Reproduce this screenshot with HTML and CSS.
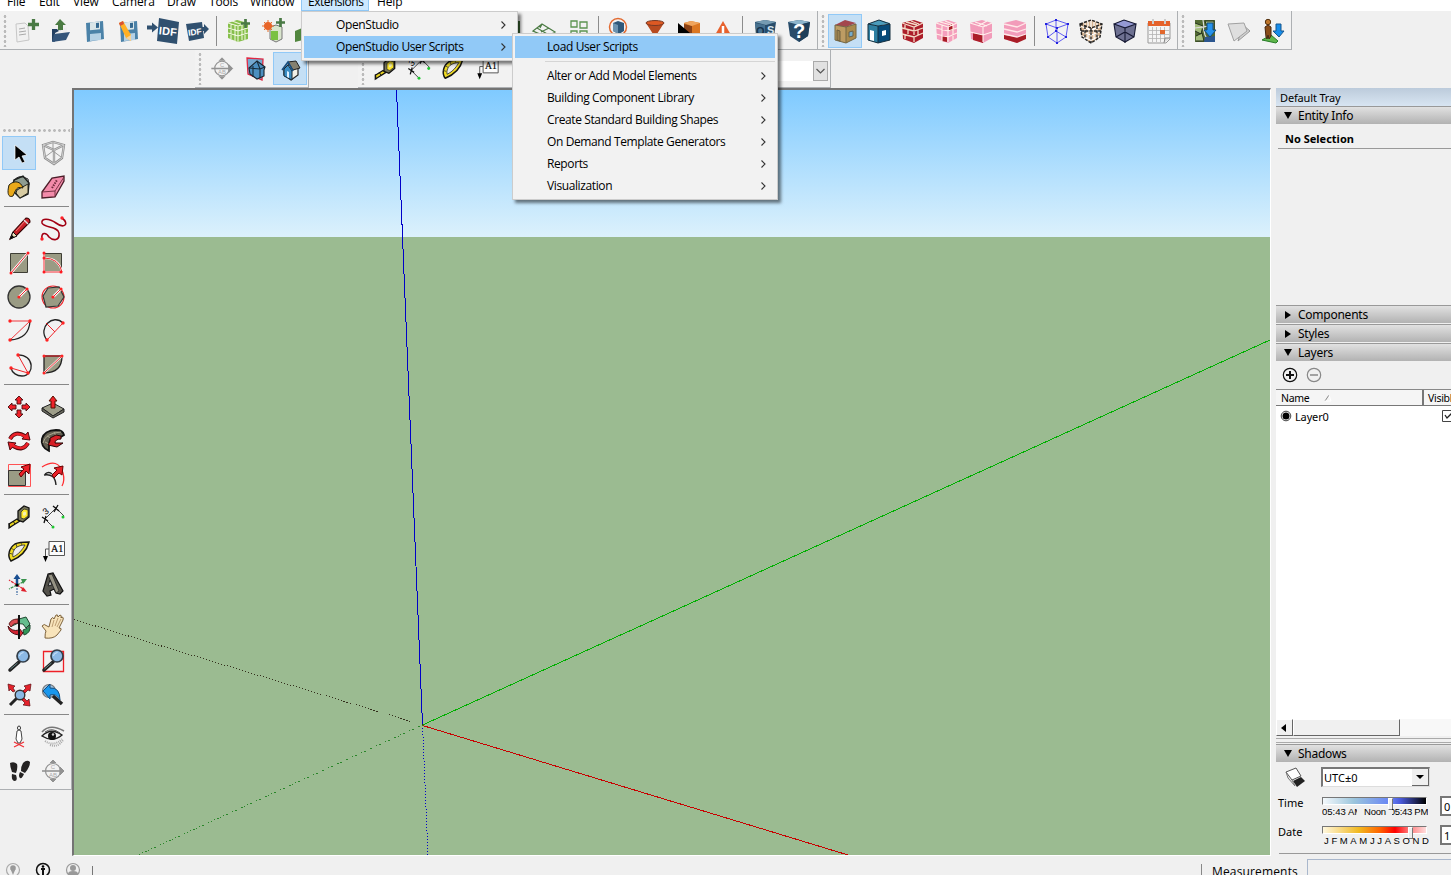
FILE: index.html
```html
<!DOCTYPE html>
<html lang="en">
<head>
<meta charset="utf-8">
<title>SketchUp</title>
<link rel="stylesheet" href="styles.css">
</head>
<body>
<svg class="defs" width="0" height="0">
  <defs>
    <symbol id="plus" viewBox="0 0 10 10"><path d="M3.500 0h3v3.500h3.500v3h-3.500V10h-3V6.500H0v-3h3.500z" fill="#4a7a45"/></symbol>
    <symbol id="section" viewBox="0 0 34 34"><g fill="none" stroke="#929292"><circle cx="17" cy="17" r="7.500" stroke-width="1.200"/><path d="M6 17h21" stroke-width="1.600"/><path d="M14 9l3-3 3 3M14 25l3 3 3-3" fill="#929292"/><path d="M24 13l4 4-4 4z" fill="#929292"/></g><g fill="#aaa" font-family="Liberation Sans" font-size="6" text-anchor="middle"><text x="17" y="15">C</text><text x="17" y="23">AB</text></g></symbol>
    <symbol id="tape" viewBox="0 0 34 34"><path d="M7 24l8-5 3 2-8 5-3 2z" fill="#e8d321" stroke="#111" stroke-width="1.300"/><path d="M7 23l1 5M11 21l2 3" stroke="#111"/><path d="M16 11l6-5 5 2v9l-6 5-5-2z" fill="#77765c" stroke="#111" stroke-width="1.300"/><path d="M19 12l3-3 4 1v6l-4 3-3-1z" fill="#ffe92d" stroke="#222" stroke-width=".7"/><path d="M21 12.500l2-1 1 1v2l-2 1.500-1-1z" fill="#f6f2b5"/></symbol>
    <symbol id="dimension" viewBox="0 0 34 34"><path d="M9 19L20 8M9 19l8 8M20 8l8 8" stroke="#444" fill="none"/><path d="M6 17l6 4M10 16l-2 7M17 6l6 5M22 5l-4 7" stroke="#111" stroke-width="1.300"/><circle cx="17" cy="27" r="1.500" fill="#1fc831"/><circle cx="27" cy="17" r="1.500" fill="#1fc831"/><text x="7" y="14" transform="rotate(-40 10 11)" font-family="Liberation Sans" font-size="9">3</text></symbol>
    <symbol id="protractor" viewBox="0 0 34 34"><path d="M9 27C5 22 7 14 13 10c4-2 9-2 14-2-2 8-8 15-18 19z" fill="#f0dc24" stroke="#171713" stroke-width="1.500"/><path d="M11 23c-1-4 1-8 4-10 3-1.500 5-2 8-2-3 5-6 9-12 12z" fill="#eee" stroke="#222" stroke-width=".8"/><path d="M7 19l3 1M9 14l3 2M14 10l1 3M19 9l1 2" stroke="#333" stroke-width=".8"/></symbol>
    <symbol id="label" viewBox="0 0 34 34"><path d="M13 7.500h15.500v14H13zM13 15H9.500v8" fill="#fcfcfc" stroke="#555"/><path d="M7 22h5l-2.500 6z"/><text x="15" y="18" font-family="Liberation Serif" font-size="10" stroke="#111" stroke-width=".2">A1</text></symbol>
    <symbol id="disk" viewBox="0 0 34 34"><path d="M8 9l17-2 1 18-17 3z" fill="#4b82a8"/><path d="M12 8.500l10-1.200v8l-10 1z" fill="#d9e5e8"/><path d="M18 9l3-.3v5l-3 .3z" fill="#356990"/><path d="M12 20l11-1v7l-11 1z" fill="#b5d1e5"/></symbol>
    <symbol id="lens" viewBox="0 0 34 34"><path d="M8 26l9-8" stroke="#222" stroke-width="3.500" stroke-linecap="round"/><path d="M8.500 25l7-6" stroke="#688" stroke-width="1"/><circle cx="21" cy="12" r="6" fill="#8bb9e5" stroke="#333e48" stroke-width="1.700"/><path d="M17.500 12q0-3 4-3.500" stroke="#cde5fb" fill="none"/></symbol>
    <symbol id="expand" viewBox="0 0 16 16"><path d="M5.500 4.500L9 8l-3.500 3.500" fill="none" stroke="#333" stroke-width="1.100"/></symbol>
  </defs>
</svg>

<div class="app">
<nav class="menubar">
  <span>File</span><span>Edit</span><span>View</span><span>Camera</span><span>Draw</span><span>Tools</span><span>Window</span><span class="open">Extensions</span><span>Help</span>
</nav>

<div class="toolrow">
  <div class="toolbar wide">
    <i class="grip"></i>
    <svg class="tool"><path d="M6 10l9-1 3 3 1 14-12 2z" fill="#f1f1f1" stroke="#c7c7c7"/><path d="M9 15l6-1M9 18l7-1M9 21l7-1" stroke="#aaa"/><use href="#plus" x="18" y="5" width="11" height="11"/></svg>
    <svg class="tool"><path d="M8 15h5l2 2 8-3v5l-13 9-2-1z" fill="#223f61"/><path d="M11 19l12-6v7l-12 6z" fill="#eee"/><path d="M10 20l16-2-4 8-14 2z" fill="#34557a"/><path d="M16 5l6 6h-3v5h-5v-5h-3z" fill="#4b7b43"/></svg>
    <svg class="tool"><use href="#disk"/></svg>
    <svg class="tool"><use href="#disk"/><path d="M7 9l4-2 8 14v6l-5-3z" fill="#ffb023"/><path d="M7 9l4-2 1 3-4 2z" fill="#d75232"/><path d="M14 24l5-3v6z" fill="#f2d29d"/></svg>
    <svg class="tool"><path d="M13 4l20 4-2 22-20-3z" fill="#30506f"/><path d="M1 11.500h5V8.500l6 5-6 5v-3H1z" fill="#30506f"/><text x="13" y="21" font-family="Liberation Sans" font-weight="bold" font-size="11" textLength="18" fill="#fff" transform="rotate(6 20 17)">IDF</text></svg>
    <svg class="tool"><path d="M6 10l16-2 2 16-15 3z" fill="#30506f"/><path d="M20 13h4v-3l5 5-5 5v-3h-4z" fill="#30506f"/><text x="8" y="21" font-family="Liberation Sans" font-weight="bold" font-size="8.500" fill="#fff" transform="rotate(-7 15 18)">IDF</text></svg>
    <i class="sep"></i>
    <svg class="tool"><path d="M6 9l9-3 11 3v16l-10 3-10-4z" fill="#86bf4b"/><path d="M6 14l10 3 10-3M6 19l10 3 10-3M16 12v16M9 10v15M13 11v16M20 10v16M23 10v16M6 9l10 3 10-3M10 7l11 4" stroke="#edf5d9" stroke-width="1.100" fill="none"/><use href="#plus" x="19" y="5" width="9" height="9"/></svg>
    <svg class="tool"><path d="M14 13l6-2 6 2v12l-6 3-6-3z" fill="#d9e5cd" stroke="#777"/><path d="M15 17h7v9h-7z" fill="#7ac143"/><path d="M12 6v12M6 12h12M8 8l8 8M16 8l-8 8" stroke="#e86c29" stroke-width="1"/><circle cx="12" cy="12" r="4" fill="#e86427"/><use href="#plus" x="20" y="4" width="9" height="9"/></svg>
    <svg class="tool"><path d="M5 17l12-5v13L5 28z" fill="#51863e"/></svg>
    <svg class="tool"></svg><svg class="tool"></svg><svg class="tool"></svg><svg class="tool"></svg><svg class="tool"></svg>
    <svg class="tool"><path d="M20 7h6v15h-6z" fill="#3f6c35"/></svg>
    <svg class="tool"><path d="M5 17l9-7 13 8-8 5zM9 14l12 7M13 18l8-4M14 10l-2 4" fill="none" stroke="#4b7b43" stroke-width="1.200"/></svg>
    <svg class="tool"><path d="M9 7h6v6H9zM18 8h7v6h-7zM9 17h6v7H9zM18 17h7v7h-7z" fill="none" stroke="#5c9450" stroke-width="1.300"/></svg>
    <i class="sep"></i>
    <svg class="tool"><circle cx="14" cy="13" r="8.500" fill="#f2f2f2" stroke="#e26a31" stroke-width="1.500"/><path d="M9 9l5-2 6 2v8l-5 3-6-3z" fill="#2f587a"/><path d="M9 9l5 2v9l-5-3z" fill="#6c93b0"/></svg>
    <svg class="tool"><path d="M8 9l7 11v5h4v-5l7-11z" fill="#b84b20"/><ellipse cx="17" cy="9" rx="9" ry="2.500" fill="#dd5923" stroke="#773a25"/></svg>
    <svg class="tool"><path d="M12 9l7-2 9 2v14l-8 4-7-5z" fill="#dc7823"/><path d="M12 10l8 2v13l-8-3z" fill="#8a4115"/><path d="M12 9l7-2 9 2-8 3z" fill="#efa55e"/><path d="M6 9v18l12-8z"/></svg>
    <svg class="tool"><path d="M17 7l8 14H9z" fill="#e7612d"/><path d="M17 12v7" stroke="#fff" stroke-width="2.500"/></svg>
    <i class="sep"></i>
    <svg class="tool"><path d="M7 8l10-2 11 2-2 15-9 5-9-5z" fill="#284c6a"/><path d="M7 8l10-2 11 2-10 3z" fill="#759bb2"/><path d="M7 9l10 2v16l-8-4z" fill="#47718f"/><text x="8" y="21" font-family="Liberation Sans" font-weight="bold" font-size="11" fill="#17334d">O</text><text x="19" y="20" font-family="Liberation Sans" font-weight="bold" font-size="11" fill="#d5e5ef">S</text></svg>
    <svg class="tool"><path d="M6 8l11-2 11 2-2 14-9 6-9-6z" fill="#284c6a"/><path d="M6 8l11-2 11 2-11 3z" fill="#8db5cc"/><path d="M17 11l11-3-2 14-9 6z" fill="#1e3e59"/><text x="11" y="24" font-family="Liberation Sans" font-weight="bold" font-size="20" fill="#fff">?</text></svg>
  </div>
  <div class="toolbar">
    <i class="grip"></i>
    <svg class="tool selected"><path d="M7 11l11 2v16L7 26z" fill="#bd9c63"/><path d="M18 13l10-3v14l-10 5z" fill="#a98a4d"/><path d="M7 11l10-5 11 3-10 4z" fill="#a3474e"/><path d="M7 11l11 2v16L7 26zM18 13l10-3v14l-10 5" fill="none" stroke="#736745"/><path d="M9 16l3 1v10l-3-1z" fill="#9b8251" stroke="#6e6141"/><path d="M21 18l4-1v5l-4 1z" fill="#75acc9" stroke="#66604b"/></svg>
    <svg class="tool"><path d="M6 10l10 2v17L6 26z" fill="#2e7fa1"/><path d="M16 12l12-2v16l-12 3z" fill="#074a78"/><path d="M6 10l11-4 11 3-12 3z" fill="#4b9bbb"/><path d="M6 10l10 2v17L6 26zM16 12l12-2v16l-12 3M6 10l11-4 11 4" fill="none" stroke="#142e3e"/><path d="M8 16l4 1v10l-4-1zM20 17l4-1v5l-4 1z" fill="#fff"/></svg>
    <svg class="tool"><path d="M6 9l12-3 9 3v15l-9 5-11-4z" fill="#ac1e2a"/><path d="M6 9l12 4 9-4M6 14l12 3 9-3M6 20l12 3 9-4M18 13v4M12 15v5M22 16v5M18 23v5M10 8l11 3M15 7l8 3M9 11v3M9 21v4M18 18v3" fill="none" stroke="#f4dbc7" stroke-width="1.300"/></svg>
    <svg class="tool"><path d="M6 9l12-3 9 3v15l-9 5-11-4z" fill="#f49fbd"/><path d="M19 11l4-1v6l-4 1zM12 22l5 1v5l-5-1z" fill="#a91d27"/><path d="M6 9l12 4 9-4M6 14l12 3 9-3M6 20l12 3 9-4M18 13v15M12 11v16M23 11v16M10 8l11 3M15 7l8 3" fill="none" stroke="#fff0e8" stroke-width="1.100"/></svg>
    <svg class="tool"><path d="M6 9l12-3 10 3v15l-9 5-12-4z" fill="#f29cba"/><path d="M9 19l10 2v8l-10-3z" fill="#ac1d29"/><path d="M6 9l13 4 9-4M6 18l13 3 9-3M19 13v15M11 8l12 4M14 12l9-5" fill="none" stroke="#fff0ed" stroke-width="1.100"/></svg>
    <svg class="tool"><path d="M6 9l12-3 10 3v15l-9 5-13-4z" fill="#f29cba"/><path d="M6 21l13 2 9-3v5l-9 4-13-4z" fill="#a91d27"/><path d="M6 10l13 3 9-4M6 15l13 3 9-3M6 20l13 3 9-3" fill="none" stroke="#ffe8e8" stroke-width="1.300"/></svg>
    <i class="sep"></i>
    <svg class="tool"><g fill="none" stroke="#4e4af0" stroke-width=".9"><path d="M6 10l10-4 12 4-11 4zM17 14v15l9-6 2-13M6 10l2 13 9 6M8 23l8-6 10 6M16 6v11"/></g><path d="M5 9h2v2H5zM15 5h2v2h-2zM27 9h2v2h-2zM16 13h2v2h-2zM15 16h2v2h-2zM16 28h2v2h-2zM7 22h2v2H7zM25 22h2v2h-2z" fill="#2222df"/></svg>
    <svg class="tool"><path d="M6 10l11-4 11 4-2 13-9 6-9-6z" fill="#d6b491"/><path d="M6 12l11 4 11-4M7 17l10 4 10-4M8 22l9 4 9-4M11 8v17M17 6v23M23 8v16M14 7v19M20 8v18" fill="none" stroke="#fff" stroke-width="1.200"/><path d="M6 10l11-4 11 4-2 13-9 6-9-6zM6 10l11 4 11-4M17 14v15M11 12v13M23 12v13M7 17h20" fill="none" stroke="#222" stroke-width="1.400" stroke-dasharray="3 1.300"/></svg>
    <svg class="tool"><path d="M6 10l10-4 12 4-2 13-9 5-9-5z" fill="#6e7192"/><path d="M6 10l10-4 12 4-11 4z" fill="#9499d4"/><path d="M6 10l11 4v14l-9-5zM28 10l-11 4v14l9-5zM6 10l10-4 12 4M8 23l9-5 9 5" stroke="#171a34" fill="none" stroke-width="1.100"/></svg>
    <svg class="tool"><path d="M6 9h22v16l-4 4H6z" fill="#f5f5f5" stroke="#999"/><path d="M6 7h22v5H6z" fill="#e5622b"/><path d="M11 5v5M23 5v5" stroke="#ccc" stroke-width="2"/><path d="M7 16.500h20M7 20.500h20M7 24.500h18M10.500 13v15M14.500 13v15M18.500 13v15M22.500 13v15" stroke="#b4b4b4" stroke-width=".8"/><path d="M18 16h5v4h-5z" fill="#e2682d"/><path d="M22 29l1-5h5" fill="#ddd" stroke="#888"/></svg>
  </div>
  <div class="toolbar google">
    <i class="grip"></i>
    <svg class="tool"><path d="M7 6h20v22H7z" fill="#526a32"/><path d="M7 9l8 3-2 8-6-3M17 7h9v9h-6zM8 22l6-3 2 8H8" fill="#a3bc7c" stroke="#26321f"/><path d="M7 14l8-1 2 8 3 6M15 6l1 7 7-2" stroke="#ddd" fill="none" stroke-width="1.200"/><path d="M17 23l10-1v6H16z" fill="#2c568f"/><path d="M19 9h6v7h3l-6 7-6-7h3z" fill="#2592ec" stroke="#174d7a"/></svg>
    <svg class="tool"><path d="M21 11l7 6-12 10z" fill="#d0d0d0" stroke="#999"/><path d="M6 10l16-1 3 8-13 10z" fill="#dedede" stroke="#a1a1a1"/></svg>
    <svg class="tool"><path d="M6 26l9-5 7 6-2 2z" fill="#5fb64b" stroke="#277b29"/><path d="M9 13l3-2 3 2v9l-2 3-1-4-1 4-1-2z" fill="#8a4d19" stroke="#442611"/><circle cx="12" cy="8" r="2.700" fill="#be752b" stroke="#523211"/><path d="M20 10h5v7h3l-5 6-6-6h3z" fill="#168deb" stroke="#17568c"/></svg>
  </div>
</div>

<div class="toolrow second">
  <div class="toolbar">
    <i class="grip"></i>
    <svg class="tool"><use href="#section"/></svg>
    <svg class="tool"><path d="M8 6l16 1-1 21-14-6z" fill="#75a9d0" stroke="#df2843" stroke-width="1.300"/><path d="M10 16l8-7 8 6-1 3v6l-7 3-7-5z" fill="#4c8fc0" stroke="#19242d" stroke-width="1.100"/><path d="M18 9l3 8v9M10 16l11 1 5-2M14 14v11" fill="none" stroke="#172b38" stroke-width="1.100"/></svg>
    <svg class="tool selected"><path d="M11 17l7-7 7 4v9l-7 5-7-5z" fill="#f1f0e8" stroke="#222" stroke-width="1.200"/><path d="M11 17l4-4 4 6v9l-8-4z" fill="#3b8dc3" stroke="#182833"/><path d="M15 10l8-1 4 7-7 2z" fill="#858170" stroke="#222"/><path d="M14 19l2 1v6l-2-1z" fill="#dcefff"/><path d="M9 18l6-8 5 9" fill="none" stroke="#174d7d" stroke-width="1.600"/></svg>
  </div>
  <div class="toolbar views">
    <i class="grip"></i>
    <svg class="tool"><use href="#tape"/></svg>
    <svg class="tool"><use href="#dimension"/></svg>
    <svg class="tool"><use href="#protractor"/></svg>
    <svg class="tool"><use href="#label"/></svg>
    <div class="layerbox"><span><svg width="13" height="18"><path d="M2.500 7L6.500 11l4-4" fill="none" stroke="#555" stroke-width="1.200"/></svg></span></div>
  </div>
</div>

<main class="work">
  <aside class="palette">
    <div class="hgrip"></div>
    <div class="pair">
      <svg class="tool selected"><path d="M13 9v15l4-3 3 6 3-1-3-6 5-1z" fill="#000" stroke="#fff" stroke-width=".7"/></svg>
      <svg class="tool"><g fill="none" stroke="#8c8c8c" stroke-width="2.300"><path d="M7 9l10-3 11 3-2 13-8 6-9-6zM7 9l11 5 10-5M18 14v14"/></g><g fill="none" stroke="#d4d4d4" stroke-width=".9"><path d="M7 9l10-3 11 3-2 13-8 6-9-6zM7 9l11 5 10-5M18 14v14"/></g><path d="M9 21l8-6 8 6M17 7v8" fill="none" stroke="#999"/></svg>
      <svg class="tool"><path d="M12 10l9-4 6 7-1 11-8 4-8-8z" fill="#8e9c91" stroke="#171b18" stroke-width="1.400"/><path d="M15 20l11-6v9l-8 5-4-5z" fill="#d7cba2" stroke="#27271e"/><path d="M7 15c5-5 12-4 14 3-7-2-7 2-10 8-5 2-6-3-4-11z" fill="#eaa919" stroke="#252110"/><path d="M11 12Q16 3 26 9l1 6" fill="none" stroke="#222"/></svg>
      <svg class="tool"><path d="M6 22l10-14 12-2v5l-9 16-13 1z" fill="#f38baa" stroke="#4c1e29" stroke-width="1.300"/><path d="M6 22l13-1L28 7M19 21v6" fill="none" stroke="#6b2b3b" stroke-width=".9"/><path d="M16 18l5-8" stroke="#702b3d" stroke-width="2" stroke-dasharray="1.500 1"/></svg>
    </div>
    <i class="rule"></i>
    <div class="pair">
      <svg class="tool"><path d="M8 27l3-7L24 6q4 0 4 4L14 24z" fill="#c92129" stroke="#300" stroke-width="1.100"/><path d="M8 27l3-7 4 4z" fill="#eee2be" stroke="#111"/><path d="M14 19L23 9" stroke="#f67c78"/><path d="M22 8l4 4" stroke="#ddd" stroke-width="1.500"/><path d="M8 27l2-4 2 2z"/></svg>
      <svg class="tool"><path d="M26 6C34 12 28 17 20 11C13 6 5 6 6 11C8 16 22 14 23 21C24 29 17 29 13 25C10 20 5 20 6 27" fill="none" stroke="#a20013" stroke-width="1.600"/><circle cx="26" cy="6" r="1.700" fill="#ff2026"/><circle cx="6" cy="27" r="1.700" fill="#ff2026"/></svg>
      <svg class="tool"><path d="M8.500 7.500h17v19h-17z" fill="#9a9b84" stroke="#3e3e35"/><path d="M9 27L26 7" stroke="#fff" stroke-width="2.500"/><path d="M9 27L26 7" stroke="#e1242b"/><g fill="#ff1b22"><circle cx="9" cy="27" r="1.500"/><circle cx="26" cy="7" r="1.500"/></g></svg>
      <svg class="tool"><path d="M8.500 7.500h17v19h-17z" fill="#9a9b84" stroke="#3e3e35"/><path d="M8 12q15 0 18 14M8 7v19h18" fill="none" stroke="#fff" stroke-width="2"/><path d="M8 12q15 0 18 14M8 7v19h18" fill="none" stroke="#ee252b"/><g fill="#ff1b22"><circle cx="8" cy="7" r="1.500"/><circle cx="8" cy="12" r="1.500"/><circle cx="8" cy="26" r="1.500"/><circle cx="25" cy="26" r="1.500"/></g></svg>
      <svg class="tool"><circle cx="17" cy="17" r="11" fill="#9a9b84" stroke="#333" stroke-width="1.300"/><path d="M17 17l8-8" stroke="#fff" stroke-width="2.500"/><path d="M17 17l8-8" stroke="#ef2329"/><circle cx="17" cy="17" r="1.600" fill="#f22"/><circle cx="25" cy="9" r="1.600" fill="#f22"/></svg>
      <svg class="tool"><circle cx="17" cy="17" r="11" fill="none" stroke="#ef2329" stroke-width="1.100"/><path d="M12 8l11-1 5 10-6 9-12 1-3-11z" fill="#9a9b84" stroke="#333" stroke-width="1.200"/><path d="M17 17l8-8" stroke="#fff" stroke-width="2.500"/><path d="M17 17l8-8" stroke="#ef2329"/><circle cx="17" cy="17" r="1.600" fill="#f22"/><circle cx="25" cy="9" r="1.600" fill="#f22"/></svg>
      <svg class="tool"><path d="M28 7q-1 18-20 19" fill="none" stroke="#222" stroke-width="1.300"/><path d="M8 7h20L8 26" fill="none" stroke="#f0393e"/><circle cx="8" cy="7" r="1.700" fill="#f22"/><circle cx="28" cy="7" r="1.700" fill="#f22"/><circle cx="8" cy="26" r="1.700" fill="#f22"/></svg>
      <svg class="tool"><path d="M11 26C1 14 17-1 27 9" fill="none" stroke="#222" stroke-width="1.300"/><path d="M11 26L27 9M10 9l9 9" stroke="#ef2329" fill="none"/><circle cx="11" cy="26" r="1.700" fill="#f22"/><circle cx="27" cy="9" r="1.700" fill="#f22"/></svg>
      <svg class="tool"><path d="M15 7c18-1 18 21 5 21-5 0-10-3-11-8" fill="none" stroke="#222" stroke-width="1.300"/><path d="M16 7l10 18-17-5" fill="none" stroke="#ef2329"/><circle cx="16" cy="7" r="1.700" fill="#f22"/><circle cx="26" cy="25" r="1.700" fill="#f22"/><circle cx="9" cy="20" r="1.700" fill="#f22"/></svg>
      <svg class="tool"><path d="M8 8h18q0 17-18 17z" fill="#9a9b84" stroke="#222" stroke-width="1.300"/><path d="M8 25L26 8" stroke="#fff" stroke-width="2"/><path d="M8 8h18L8 25" fill="none" stroke="#ef2329"/><circle cx="8" cy="8" r="1.500" fill="#f22"/><circle cx="26" cy="8" r="1.500" fill="#f22"/><circle cx="8" cy="25" r="1.500" fill="#f22"/></svg>
    </div>
    <i class="rule"></i>
    <div class="pair">
      <svg class="tool"><g fill="#ef2028" stroke="#440d10" stroke-width=".9"><path d="M17 6l4 4h-2v4h-4v-4h-2zM17 28l4-4h-2v-4h-4v4h-2zM6 17l4-4v2h4v4h-4v2zM28 17l-4-4v2h-4v4h4v2z"/></g></svg>
      <svg class="tool"><path d="M6 18l11-5 11 6-11 7z" fill="#9d9d89" stroke="#222"/><path d="M6 18v3l11 7 11-6v-3l-11 7z" fill="#69695e" stroke="#222"/><path d="M17 6l4 5h-2v7h-4v-7h-2z" fill="#f0222a" stroke="#510"/></svg>
      <svg class="tool"><g fill="none" stroke="#4d080d" stroke-width="4"><path d="M8 15Q13 6 23 12"/><path d="M26 19Q21 28 11 22"/></g><path d="M26 8l2 8-8-1zM8 26l-2-8 8 1z" fill="#ed2028" stroke="#4d080d"/><g fill="none" stroke="#ed2028" stroke-width="2.600"><path d="M8 15Q13 6 24 13"/><path d="M26 19Q21 28 10 21"/></g></svg>
      <svg class="tool"><path d="M13 27C1 22 4 6 20 6q7 0 8 5l-5 3q-9-2-10 6z" fill="#635f52" stroke="#111" stroke-width="1.800"/><path d="M7 19q2-10 18-11M9 18l4 2M11 12l4 2M18 8l2 4" fill="none" stroke="#aaa58e"/><path d="M14 14l6-3 5 1v3q-6 0-6 4h8l-6 4-9-2 2-4z" fill="#d61e25" stroke="#270505"/></svg>
      <svg class="tool"><path d="M6.500 6.500h22v22h-22z" fill="none" stroke="#ff5354"/><path d="M6.500 12.500h17v15h-17z" fill="#9a9b84" stroke="#333"/><path d="M17 16l5-5-3-2 9-3-1 10-3-3-5 6z" fill="#ec2028" stroke="#600"/></svg>
      <svg class="tool"><path d="M6 9Q22-1 27 15q2 8-1 13" fill="none" stroke="#ff2d31" stroke-width="1.300"/><path d="M8 17q11-2 12 10M9 16q4-3 7 0" fill="none" stroke="#222" stroke-width="1.400"/><path d="M16 17l5-5-3-2 9-2-1 9-3-2-5 5z" fill="#e81f27" stroke="#600"/></svg>
    </div>
    <i class="rule"></i>
    <div class="pair">
      <svg class="tool"><use href="#tape"/></svg><svg class="tool"><use href="#dimension"/></svg>
      <svg class="tool"><use href="#protractor"/></svg><svg class="tool"><use href="#label"/></svg>
      <svg class="tool"><path d="M15 16V8" stroke="#194f91" stroke-width="2.500"/><path d="M11.500 11l3.500-5 3.500 5z" fill="#194f91"/><path d="M15 17l8-4M15 17l-8 4" stroke="#39934d" stroke-width="1.300" stroke-dasharray="3 1"/><path d="M19 11l6 0-4 5z" fill="#39934d"/><path d="M15 17l8 5M15 17l-8-5" stroke="#df2835" stroke-width="1.300" stroke-dasharray="3 1"/><path d="M21 19l4 5-6-1z" fill="#df1e2a"/><path d="M15 17v10" stroke="#194f91" stroke-dasharray="2 1"/><circle cx="15" cy="17" r="1.600"/></svg>
      <svg class="tool"><path d="M7 23l5-17 5-1 10 18-3 3-4-1-2-4-4 2 1 4-4 1z" fill="#54524b" stroke="#111" stroke-width="1.200"/><path d="M12 7l8 18 3-2-7-17z" fill="#969384" stroke="#222" stroke-width=".8"/><path d="M12 18l2-6 2 5z" fill="#bbb" stroke="#222"/></svg>
    </div>
    <i class="rule"></i>
    <div class="pair">
      <svg class="tool"><path d="M17 9l7-2 4 7-4 4-3-4q-6-2-11 2 0-6 7-7z" fill="#65bd8d" stroke="#1f4930"/><path d="M28 15q1 8-6 10l-1-5q5-1 7-5z" fill="#319558" stroke="#1f4930"/><path d="M6 16q4 6 11 4v-2l4 5-4 5v-3q-10-1-11-9z" fill="#d42432" stroke="#510c12"/><path d="M7 14q2-5 9-5v4q-5 0-7 4z" fill="#db4c52" stroke="#641e20"/><path d="M17 5v24" stroke="#111" stroke-width="2"/></svg>
      <svg class="tool"><path d="M9 28q0-5 1-7L6 16q2-3 5 0l2 1 2-8q2-3 3 0l2-4q2-1 2 2l2-2q2 0 1 3l1-1q2 0 1 3l-4 8q3 0 2 2l-4 5q-4 4-12 3z" fill="#f8e4bb" stroke="#7e633d"/><path d="M18 10l-2 7M22 8l-3 8M25 9l-4 8" stroke="#ad8b5f" stroke-width=".8"/></svg>
      <svg class="tool"><use href="#lens"/></svg>
      <svg class="tool"><path d="M7.500 7.500h20v20h-20z" fill="none" stroke="#ee2027" stroke-width="1.300"/><use href="#lens"/></svg>
      <svg class="tool"><path d="M8 27l8-8" stroke="#222" stroke-width="3"/><circle cx="18" cy="17" r="4.800" fill="#8bb9e5" stroke="#333" stroke-width="1.400"/><g fill="#e4222b" stroke="#5d0c10" stroke-width=".7"><path d="M6 6l7 2-2 2 2 3-2 1-3-3-1 2zM29 6l-1 7-2-1-3 3-2-2 3-3-2-2zM28 28l-7-1 2-2-3-3 2-2 3 3 2-2z"/></g></svg>
      <svg class="tool"><circle cx="13" cy="13" r="6.500" fill="#9fc4e4" stroke="#777" stroke-width="1.200"/><path d="M17 18l9 8" stroke="#222" stroke-width="3.500"/><path d="M7 13l7-7v4q10-1 10 12-4-7-10-5v4z" fill="#1997ed" stroke="#164d7c"/></svg>
    </div>
    <i class="rule"></i>
    <div class="pair">
      <svg class="tool"><ellipse cx="17" cy="8" rx="1.500" ry="2" fill="#fff" stroke="#333"/><path d="M15 11q2-2 4 0l1 8-2 4h-2l-2-4z" fill="#fff" stroke="#444"/><path d="M12 27l10-5M12 22l10 5" stroke="#ef3137" stroke-width="1.300"/></svg>
      <svg class="tool"><path d="M6 12Q14 3 28 11" fill="none" stroke="#777" stroke-width="1.600"/><path d="M6 16q9-9 20-1-9 8-20 1z" fill="#eee" stroke="#222" stroke-width="1.400"/><path d="M9 12q7-5 15 1" fill="none" stroke="#555"/><circle cx="16" cy="16" r="4" fill="#111"/><circle cx="17" cy="14.500" r="1.200" fill="#ccc"/><path d="M9 21q9 6 17-2M14 25q8 3 13-5" fill="none" stroke="#aaa" stroke-dasharray="1 1" stroke-width="2"/></svg>
      <svg class="tool"><path d="M8 9q4-2 7 1 1 4-1 9l-4-1q-2-5-2-9zM21 9q4-4 7-1 0 5-5 11l-4-2q0-5 2-8zM10 20l4 1q2 6-1 6-4 0-3-7zM18 18l4 2q-2 5-4 4-2-2 0-6z" fill="#252323"/></svg>
      <svg class="tool"><use href="#section"/></svg>
    </div>
  </aside>

  <section class="viewport">
    <svg width="1196" height="765" viewBox="74 90 1196 765">
      <defs><linearGradient id="sky" x2="0" y2="1"><stop stop-color="#7fcaff"/><stop offset="1" stop-color="#dcf1fc"/></linearGradient></defs>
      <path d="M74 90h1196v147H74z" fill="url(#sky)"/>
      <path d="M74 237h1196v618H74z" fill="#9bbb91"/>
      <g fill="none" shape-rendering="crispEdges">
        <path d="M396.500 90l26 635" stroke="#0000c8"/>
        <path d="M422.500 725L1270 340" stroke="#00b000"/>
        <path d="M422.500 725.500L848 855" stroke="#c80000"/>
        <path d="M422.500 725l5.500 130" stroke="#0000c8" stroke-dasharray="1 2"/>
        <path d="M422.500 725L74 619.500" stroke="#332f1c" stroke-dasharray="1.050 2.080"/>
        <path d="M422.500 725L138 855" stroke="#2a862a" stroke-dasharray="1.100 2.200"/>
      </g>
    </svg>
  </section>

  <aside class="tray">
    <div class="traytitle">Default Tray</div>
    <div class="head"><b class="down"></b>Entity Info</div>
    <div class="entity"><strong>No Selection</strong></div>
    <div class="head"><b class="right"></b>Components</div>
    <div class="head"><b class="right"></b>Styles</div>
    <div class="head"><b class="down"></b>Layers</div>
    <div class="layeractions">
      <svg width="16" height="16"><circle cx="8" cy="8" r="6.700" fill="none" stroke="#111" stroke-width="1.200"/><path d="M8 4v8M4 8h8" stroke="#111" stroke-width="2"/></svg>
      <svg width="16" height="16"><circle cx="8" cy="8" r="6.700" fill="none" stroke="#888" stroke-width="1.200"/><path d="M4 8h8" stroke="#888" stroke-width="1.500"/></svg>
    </div>
    <div class="columns"><span>Name</span><svg width="8" height="8"><path d="M1 7l4-6" stroke="#888"/><path d="M5 1l2 6H1" stroke="#fff" fill="none"/></svg><span class="visible">Visible</span></div>
    <div class="layers">
      <svg width="12" height="12"><circle cx="6" cy="6" r="4.800" fill="#fff" stroke="#444"/><circle cx="6" cy="6" r="3.500"/></svg><span>Layer0</span>
      <svg class="check" width="12" height="12"><path d="M.5.5h11v11H.5z" fill="#fff" stroke="#444"/><path d="M3 5l2 3 5-5" fill="none" stroke="#222" stroke-width="1.300"/></svg>
    </div>
    <div class="scroll"><span class="arrow"><b></b></span><span class="thumb"></span></div>
    <div class="groove"></div>
    <div class="head"><b class="down"></b>Shadows</div>
    <div class="zone">
      <svg width="22" height="22"><path d="M1 6l10-4 5 8-9 4z" fill="#fff" stroke="#555"/><path d="M8 15l8-4 4 4-8 6z" fill="#222"/><path d="M1 6l2 6 7 8M7 14l3 6" fill="none" stroke="#777"/></svg>
      <div class="combo"><span>UTC±0</span><i><b></b></i></div>
    </div>
    <div class="slider"><label>Time</label><div><div class="track time"><i></i></div><p class="times"><span>05:43 AM</span><span>Noon</span><span>05:43 PM</span></p></div><span class="field">0</span></div>
    <div class="slider"><label>Date</label><div><div class="track date"><i></i></div><p class="months"><span>J</span><span>F</span><span>M</span><span>A</span><span>M</span><span>J</span><span>J</span><span>A</span><span>S</span><span>O</span><span>N</span><span>D</span></p></div><span class="field">1</span></div>
    <div class="trayend"></div>
  </aside>
</main>

<footer class="status">
  <div class="state">
    <svg width="16" height="16"><circle cx="8" cy="8" r="6.500" fill="none" stroke="#aaa" stroke-width="1.200"/><circle cx="8" cy="6" r="2.800" fill="#999"/><path d="M5.500 7h5L8 13z" fill="#999"/></svg>
    <svg width="16" height="16"><circle cx="8" cy="8" r="6.500" fill="none" stroke="#111" stroke-width="1.500"/><circle cx="8" cy="4.500" r="1.300"/><path d="M6 7h4M8 7v6" stroke="#111" stroke-width="2"/></svg>
    <svg width="16" height="16"><circle cx="8" cy="8" r="6.500" fill="none" stroke="#999" stroke-width="1.200"/><circle cx="8" cy="6" r="3" fill="#999"/><path d="M3 12q0-3 5-3t5 3v1H3z" fill="#999"/></svg>
    <i></i>
  </div>
  <div class="measure"><span>Measurements</span><div></div></div>
</footer>
</div>

<div class="menu main-menu">
  <div class="item"><span>OpenStudio</span><svg width="16" height="16"><use href="#expand"/></svg></div>
  <div class="item active"><span>OpenStudio User Scripts</span><svg width="16" height="16"><use href="#expand"/></svg></div>
</div>
<div class="menu sub-menu">
  <div class="item active"><span>Load User Scripts</span></div>
  <div class="line"></div>
  <div class="item"><span>Alter or Add Model Elements</span><svg width="16" height="16"><use href="#expand"/></svg></div>
  <div class="item"><span>Building Component Library</span><svg width="16" height="16"><use href="#expand"/></svg></div>
  <div class="item"><span>Create Standard Building Shapes</span><svg width="16" height="16"><use href="#expand"/></svg></div>
  <div class="item"><span>On Demand Template Generators</span><svg width="16" height="16"><use href="#expand"/></svg></div>
  <div class="item"><span>Reports</span><svg width="16" height="16"><use href="#expand"/></svg></div>
  <div class="item"><span>Visualization</span><svg width="16" height="16"><use href="#expand"/></svg></div>
</div>
</body>
</html>
```

FILE: styles.css
```css
* { box-sizing: border-box; }
body { margin: 0; width: 1451px; height: 875px; overflow: hidden; position: relative; background: #f0f0f0; color: #000; font: 12px/16px "Open Sans", "Noto Sans", sans-serif; }
.defs { position: absolute; }
svg { display: block; flex: none; }
.app { height: 875px; overflow: hidden; display: flex; flex-direction: column; }

.menubar { height: 11px; flex: none; background: #fff; display: grid; grid-template-columns: 32px 34px 39px 55px 42px 41px 51px 68px 60px; padding-left: 7px; overflow: hidden; letter-spacing: -.15px; }
.menubar span { height: 11px; line-height: 16px; margin-top: -6px; white-space: nowrap; }
.menubar .open { background: #cce8ff; border: 1px solid #90c8f6; height: 17px; line-height: 14px; padding-left: 6px; letter-spacing: -.5px; }
.menubar span:last-child { padding-left: 8px; }

.toolrow { height: 38px; flex: none; display: flex; }
.toolbar { display: flex; flex: none; background: #f2f2f2; border-right: 1px solid #adb0b3; border-bottom: 1px solid #adb0b3; padding: 3px 1px 0 0; height: 39px; }
.toolbar .grip { width: 10px; height: 33px; flex: none; background: radial-gradient(circle, #bbb 1.2px, transparent 1.6px) 3px 0 / 4px 5px repeat-y; }
.tool { width: 34px; height: 34px; overflow: visible; }
.selected { background: #c4dff5; box-shadow: inset 0 0 0 1px #91c9f7; }
.sep { width: 8px; height: 30px; margin-top: 2px; flex: none; background: linear-gradient(#8c8c8c, #8c8c8c) 2px 0 / 1px 100% no-repeat; }
.wide { width: 818px; }
.google { width: 114px; }
.second { padding-left: 195px; height: 39px; }
.second .toolbar { height: 38px; margin-top: 1px; padding-top: 2px; }
.second .toolbar .tool { height: 33px; }
.second .views { margin-left: 49px; width: 473px; }
.layerbox { margin: 9px 0 0 189px; width: 135px; height: 20px; background: #fff; display: flex; justify-content: flex-end; }
.layerbox span { width: 15px; height: 20px; border: 1px solid #aaa; background: #e1e1e1; }

.work { display: flex; height: 769px; flex: none; }
.palette { width: 72px; height: 662px; margin-top: 40px; padding: 0 1px 0 2px; border-right: 1px solid #adb0b3; border-bottom: 1px solid #adb0b3; background: #f2f2f2; }
.hgrip { height: 8px; background: radial-gradient(circle, #bbb 1.2px, transparent 1.6px) 0 0 / 5px 5px repeat-x; }
.pair { display: grid; grid-template-columns: 34px 34px; }
.rule { display: block; height: 8px; margin: 0 1px 0 2px; background: linear-gradient(#888, #888) 0 2px / 100% 1px no-repeat; }
.viewport { width: 1199px; height: 768px; border: 2px solid #747474; border-right: 1px solid #fff; border-bottom: 1px solid #fff; overflow: hidden; }

.tray { margin-left: 5px; width: 175px; overflow: hidden; font: 11px/16px "Noto Sans", sans-serif; }
.traytitle { height: 18px; padding-left: 4px; line-height: 20px; letter-spacing: -.15px; background: linear-gradient(#bccbdb, #d8e5f2); }
.head { height: 18px; margin-bottom: 1px; border-top: 1px solid #999; background: linear-gradient(#e1e1e1, #b2b2b2); padding-left: 8px; display: flex; align-items: center; font-size: 12px; line-height: 15px; letter-spacing: -.25px; }
.head b { width: 14px; }
.down::before, .right::before { content: ""; display: block; width: 0; border: 4px solid transparent; }
.down::before { border-top: 7px solid #000; border-bottom: 0; }
.right::before { border-left: 6px solid #000; border-right: 0; margin-left: 1px; }
.entity { height: 180px; padding: 6px 0 0 9px; background: linear-gradient(#999, #999) 2px 23px / 180px 1px no-repeat; }
.layeractions { display: flex; gap: 8px; padding: 5px 6px; height: 27px; }
.columns { height: 17px; display: flex; align-items: center; border-top: 1px solid #888; border-bottom: 1px solid #777; background: #f5f5f5; padding-left: 5px; width: 200px; font-size: 10.5px; letter-spacing: -.3px; }
.columns svg { margin-left: 15px; }
.visible { margin-left: auto; width: 54px; border-left: 2px solid #777; padding-left: 4px; }
.layers { background: #fff; height: 313px; padding: 2px 4px; display: flex; align-items: flex-start; line-height: 18px; width: 200px; }
.layers svg { margin-top: 2px; }
.layers span { width: 150px; padding-left: 3px; letter-spacing: -.15px; }
.scroll { height: 17px; background: #f8f8f8; display: flex; }
.arrow, .thumb { background: #f0f0f0; border: 1px solid #fff; border-right-color: #666; border-bottom-color: #666; width: 17px; }
.thumb { width: 107px; }
.arrow b { display: block; margin: 4px; width: 0; border: 4px solid transparent; border-right: 5px solid #000; border-left-width: 0; }
.groove { height: 5px; margin: 2px 0 1px; border-top: 1px solid #aaa; border-bottom: 1px solid #aaa; }
.zone { display: flex; height: 31px; padding: 3px 0 0 9px; gap: 14px; }
.combo { width: 109px; height: 20px; margin-top: 1px; background: #fff; border: 2px solid #777; border-right: 1px solid #ddd; border-bottom: 1px solid #ddd; display: flex; justify-content: space-between; padding-left: 1px; line-height: 18px; }
.combo i { width: 17px; background: #f0f0f0; border-right: 1px solid #666; border-bottom: 1px solid #666; }
.combo b { display: block; width: 8px; margin: 6px 4px; border: 4px solid transparent; border-top-color: #000; border-bottom: 0; }
.slider { height: 29px; display: grid; grid-template-columns: 44px 108px 22px; padding: 2px 0 0 2px; width: 200px; }
.slider label { line-height: 14px; }
.track { width: 105px; height: 8px; border: 1px solid #777; border-right-color: #fff; border-bottom-color: #fff; margin-top: 1px; }
.track i { display: block; width: 5px; height: 12px; background: #f0f0f0; border: 1px solid #fff; border-right-color: #777; border-bottom-color: #777; }
.time { background: linear-gradient(90deg, #f5f9fc, #9bc5dc 30%, #6885f5 65%, #4b5bdc 75%, #000); }
.time i { margin-left: 65px; }
.date { background: linear-gradient(90deg, #fff8df, #f1b820 35%, #ff6500 55%, #f00 70%, #ff7777 83%, #ffdddd); }
.date i { margin-left: 85px; }
.slider p { margin: 1px 0 0; width: 107px; display: flex; font: 9.5px/11px "Liberation Sans", sans-serif; }
.times span { width: 35px; overflow: hidden; white-space: nowrap; }
.times span:nth-child(2) { margin-left: 7px; width: 24px; letter-spacing: -.2px; }
.times span:last-child { width: 36px; margin-left: 4px; display: flex; justify-content: flex-end; letter-spacing: -.3px; }
.months { justify-content: space-between; padding: 0 0 0 2px; }
.field { margin-left: 10px; height: 20px; width: 30px; border: 2px solid #777; background: #fff; padding-left: 2px; line-height: 18px; }
.trayend { border-top: 1px solid #999; margin: 1px 0 0 3px; }

.status { display: flex; justify-content: space-between; height: 40px; padding-top: 2px; }
.state { display: flex; gap: 14px; padding: 3px 0 0 5px; }
.state i { width: 1px; height: 15px; background: #777; margin: 4px 0 0 -3px; }
.measure { width: 250px; display: flex; }
.measure span { width: 106px; height: 17px; margin-top: 5px; padding-left: 10px; border-left: 1px solid #888; font-size: 12px; line-height: 15px; letter-spacing: .15px; }
.measure div { height: 20px; flex: 1; border-left: 1px solid #a9b7cc; border-top: 1px solid #a9b7cc; }

.menu { position: absolute; background: #f2f2f2; border: 1px solid #ccc; box-shadow: 3px 3px 3px rgba(0,0,0,.5); padding: 2px; letter-spacing: -.39px; }
.main-menu { left: 301px; top: 11px; width: 217px; height: 50px; }
.sub-menu { left: 512px; top: 33px; width: 266px; height: 167px; }
.item { height: 22px; display: flex; justify-content: space-between; align-items: center; padding-left: 32px; padding-right: 3px; }
.active { background: #91c9f7; }
.line { height: 7px; margin-left: 30px; background: linear-gradient(#d5d5d5, #d5d5d5) 0 3px / 100% 1px no-repeat; }
```
